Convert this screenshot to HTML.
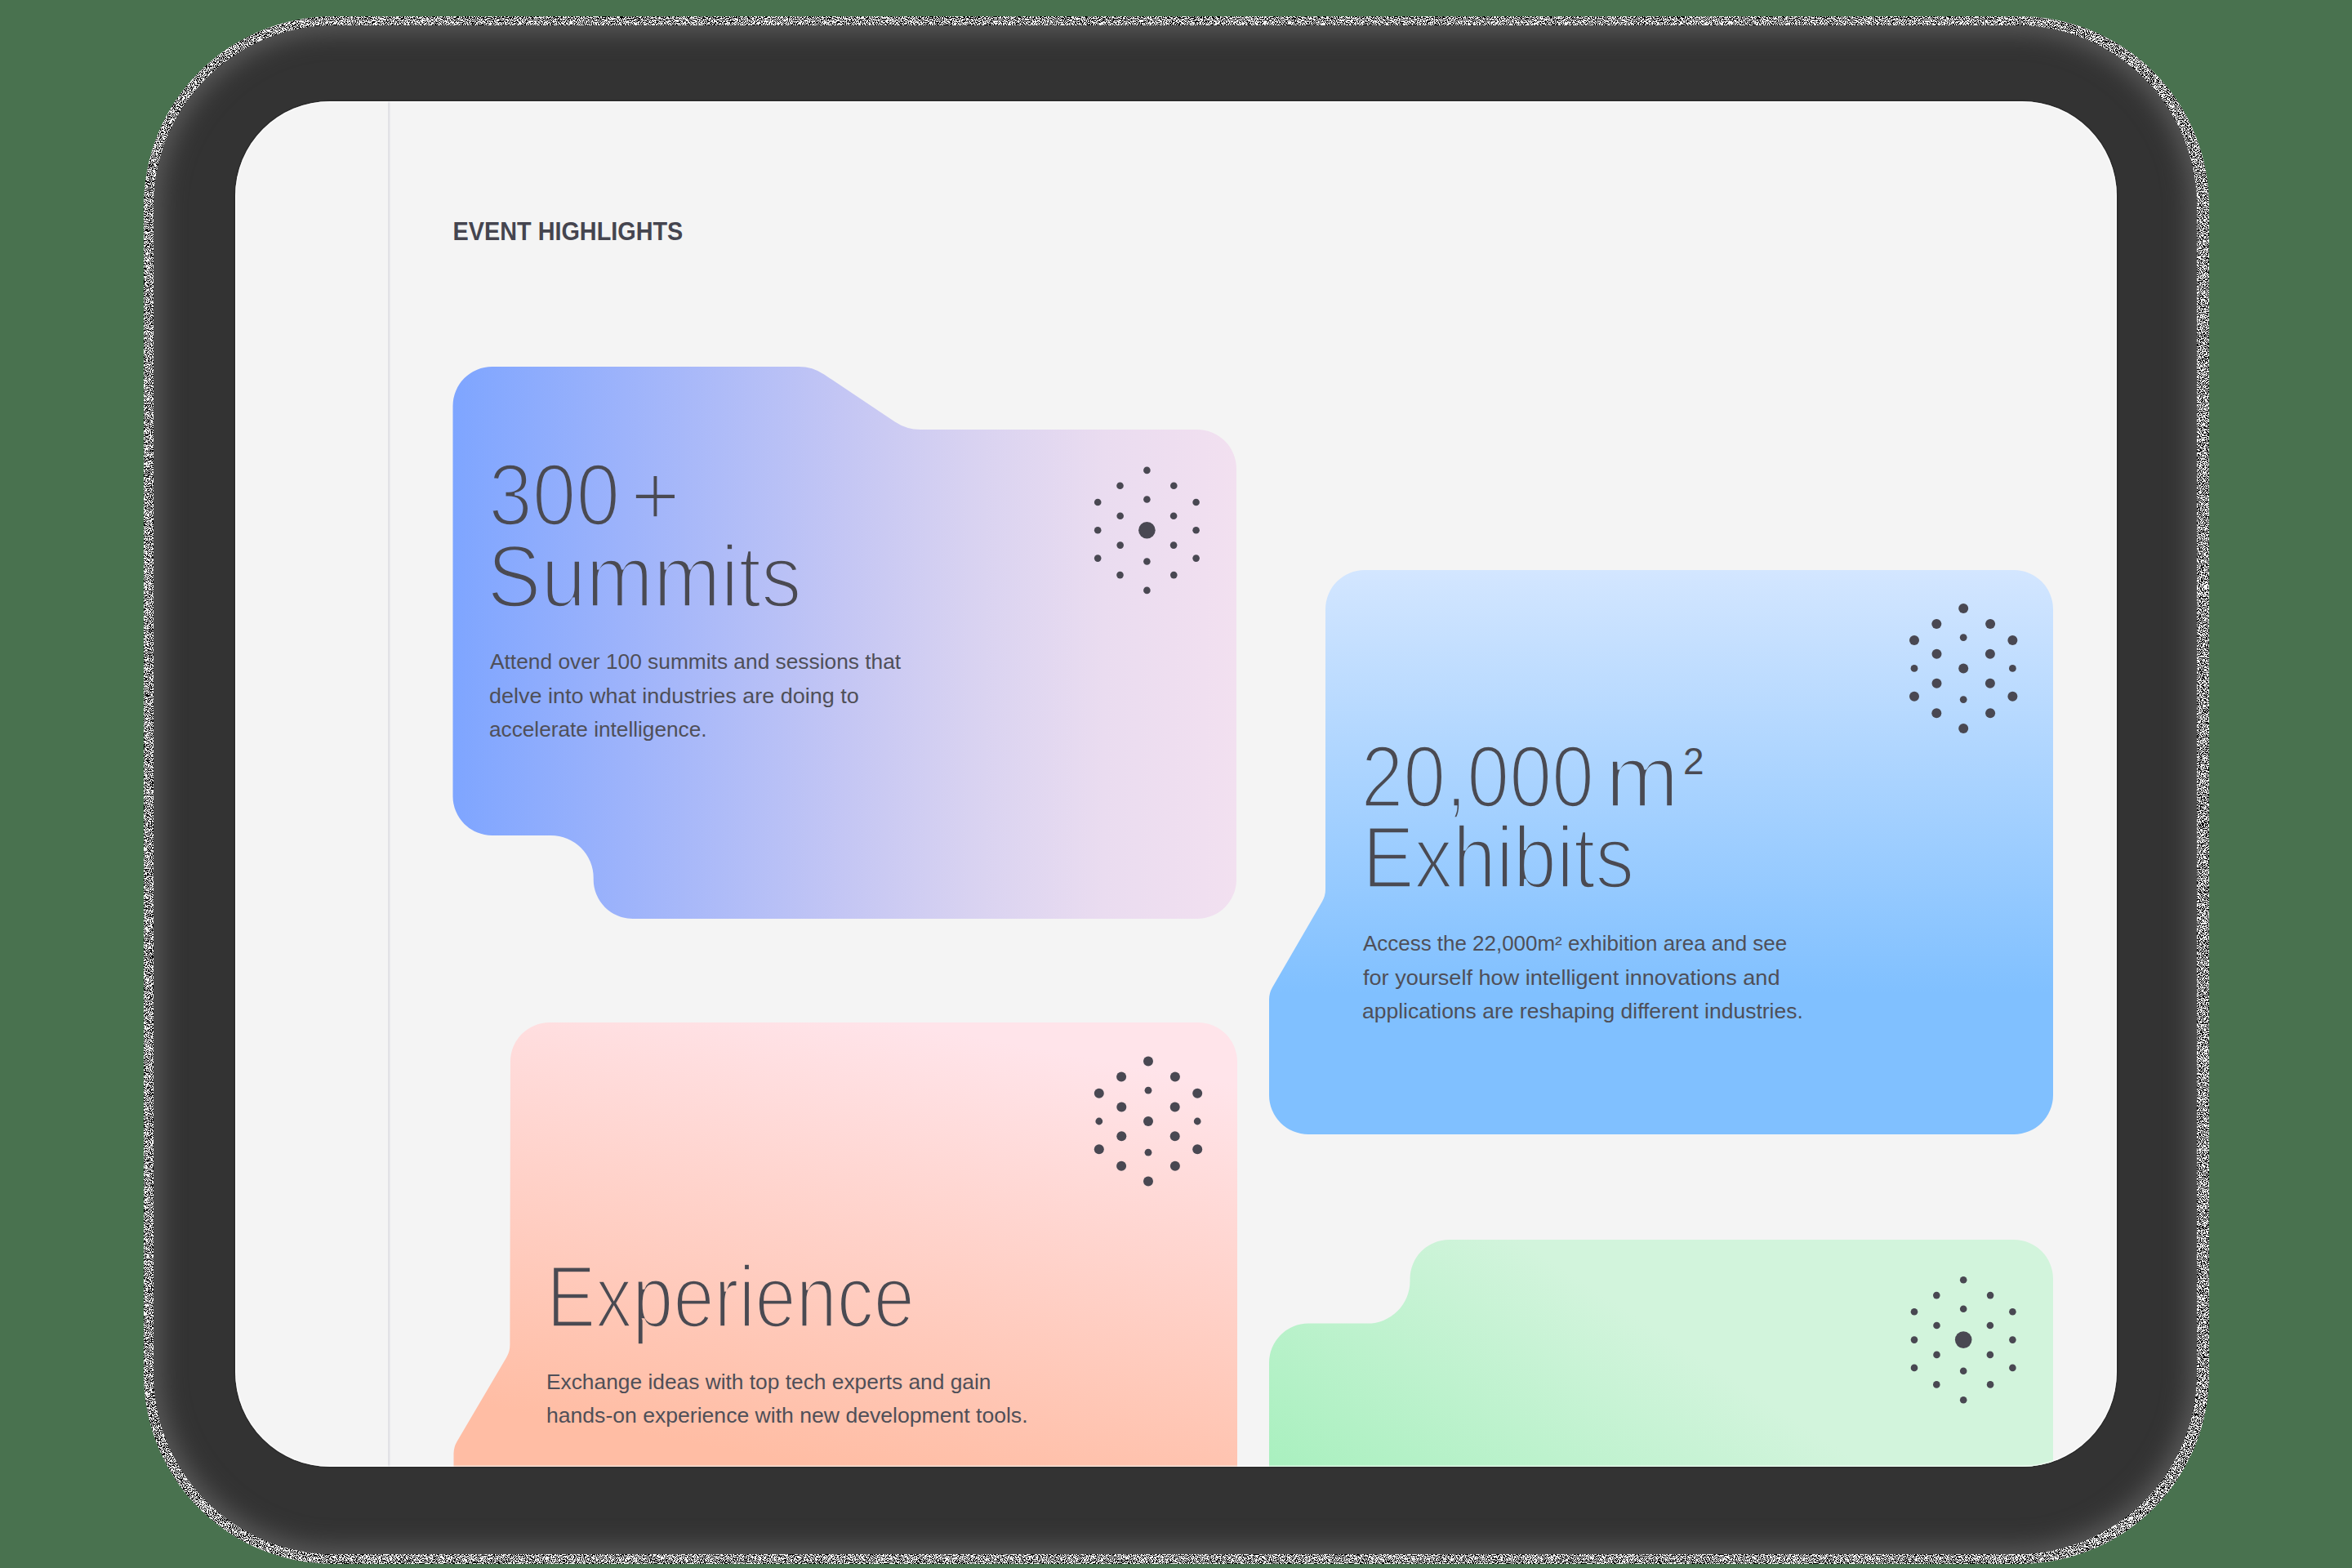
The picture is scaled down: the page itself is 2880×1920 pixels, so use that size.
<!DOCTYPE html>
<html><head><meta charset="utf-8">
<style>
html,body{margin:0;padding:0;width:2880px;height:1920px;overflow:hidden;background:#49724f;}
.b{position:absolute;}
svg{position:absolute;left:0;top:0;}
text{font-family:"Liberation Sans",sans-serif;}
</style></head><body>
<svg width="2880" height="1920"><defs><filter id="nz" x="0" y="0" width="2880" height="1920" filterUnits="userSpaceOnUse" color-interpolation-filters="sRGB">
<feTurbulence type="fractalNoise" baseFrequency="0.9" numOctaves="1" seed="7" result="t"/>
<feColorMatrix in="t" type="matrix" values="0 0 0 0 0  0 0 0 0 0  0 0 0 0 0  1 0 0 0 0" result="a"/>
<feComponentTransfer in="a" result="b"><feFuncA type="discrete" tableValues="1 1 1 1 1 1 1 1 1 1 1 1 0 0 0 0 0 0 0 0 0 0 0 0 0"/></feComponentTransfer>
<feComposite in="b" in2="SourceGraphic" operator="in"/></filter></defs>
<rect x="176" y="20" width="2529" height="1895" rx="232" ry="232" fill="#f2f2f2"/>
<rect x="176" y="20" width="2529" height="1895" rx="232" ry="232" fill="#000" filter="url(#nz)"/></svg>
<div class="b" style="left:188px;top:31px;width:2502px;height:1872px;border-radius:221px;background:#333333;box-shadow:inset 0 0 30px 8px #5c5c5c;"></div>
<svg width="2880" height="1920" viewBox="0 0 2880 1920">
<defs>
<clipPath id="scr"><rect x="288" y="124" width="2304" height="1672" rx="116" ry="116"/></clipPath>
<linearGradient id="g1" gradientUnits="userSpaceOnUse" x1="554" y1="0" x2="1514" y2="0">
<stop offset="0" stop-color="#7ea5ff"/><stop offset="0.22" stop-color="#9db3fb"/><stop offset="0.5" stop-color="#c4c6f4"/><stop offset="0.66" stop-color="#d8d2f1"/><stop offset="0.83" stop-color="#eadcf0"/><stop offset="1" stop-color="#f2e0f0"/></linearGradient>
<linearGradient id="g2" gradientUnits="userSpaceOnUse" x1="0" y1="698" x2="0" y2="1389">
<stop offset="0" stop-color="#d3e6ff"/><stop offset="0.75" stop-color="#80c0ff"/><stop offset="1" stop-color="#80c0ff"/></linearGradient>
<linearGradient id="g3" gradientUnits="userSpaceOnUse" x1="1100" y1="1252" x2="1000" y2="1796">
<stop offset="0" stop-color="#ffe4ea"/><stop offset="1" stop-color="#ffbda4"/></linearGradient>
<linearGradient id="g4" gradientUnits="userSpaceOnUse" x1="1554" y1="1796" x2="1772" y2="1461">
<stop offset="0" stop-color="#a9f0bf"/><stop offset="1" stop-color="#d2f4dc"/></linearGradient>
</defs>
<rect x="286.5" y="122.5" width="2307" height="1675" rx="117.5" ry="117.5" fill="#2a2a2a"/>
<g clip-path="url(#scr)">
<rect x="288" y="124" width="2304" height="1672" fill="#f4f4f4"/>
<rect x="475" y="124" width="2.5" height="1672" fill="#e2e2e6"/>
<path d="M554.50,497.00 A48,48 0 0 1 602.50,449.00 L977.98,449.00 A56,56 0 0 1 1009.14,458.47 L1095.86,516.53 A56,56 0 0 0 1127.02,526.00 L1466.00,526.00 A48,48 0 0 1 1514.00,574.00 L1514.00,1077.00 A48,48 0 0 1 1466.00,1125.00 L774.70,1125.00 A48,48 0 0 1 726.70,1077.00 L726.70,1075.00 A52,52 0 0 0 674.70,1023.00 L602.50,1023.00 A48,48 0 0 1 554.50,975.00 Z" fill="url(#g1)"/>
<path d="M1623.00,746.00 A48,48 0 0 1 1671.00,698.00 L2466.00,698.00 A48,48 0 0 1 2514.00,746.00 L2514.00,1341.00 A48,48 0 0 1 2466.00,1389.00 L1602.00,1389.00 A48,48 0 0 1 1554.00,1341.00 L1554.00,1224.07 A30,30 0 0 1 1558.05,1209.02 L1618.95,1103.98 A30,30 0 0 0 1623.00,1088.93 Z" fill="url(#g2)"/>
<path d="M624.93,1299.93 A48,48 0 0 1 672.93,1252.00 L1467.00,1252.00 A48,48 0 0 1 1515.00,1300.00 L1515.00,1950.00 L555.50,1950.00 L555.50,1780.18 A30,30 0 0 1 559.65,1764.95 L620.26,1662.03 A30,30 0 0 0 624.41,1646.85 Z" fill="url(#g3)"/>
<path d="M1726.50,1566.00 A48,48 0 0 1 1774.50,1518.00 L2466.00,1518.00 A48,48 0 0 1 2514.00,1566.00 L2514.00,1950.00 L1554.00,1950.00 L1554.00,1668.60 A48,48 0 0 1 1602.00,1620.60 L1674.50,1620.60 A52,52 0 0 0 1726.50,1568.60 Z" fill="url(#g4)"/>
<text id="eh" x="554.60" y="294.20" font-size="30.7" font-weight="bold" fill="#45454f" textLength="281.69" lengthAdjust="spacingAndGlyphs">EVENT HIGHLIGHTS</text>
<text id="h1a" x="598.14" y="643.20" font-size="107" fill="#4a4a52" stroke="url(#g1)" stroke-width="3.6" textLength="160.90" lengthAdjust="spacingAndGlyphs">300</text>
<text id="h1p" x="772.12" y="643.40" font-size="107" fill="#4a4a52" stroke="url(#g1)" stroke-width="3.6" textLength="60.90" lengthAdjust="spacingAndGlyphs">+</text>
<text id="h1b" x="596.54" y="742.80" font-size="107" fill="#4a4a52" stroke="url(#g1)" stroke-width="3.6" textLength="384.96" lengthAdjust="spacingAndGlyphs">Summits</text>
<text id="d1a" x="600.00" y="819.20" font-size="26" fill="#4f4f58" textLength="503.16" lengthAdjust="spacingAndGlyphs">Attend over 100 summits and sessions that</text>
<text id="d1b" x="598.96" y="860.70" font-size="26" fill="#4f4f58" textLength="452.79" lengthAdjust="spacingAndGlyphs">delve into what industries are doing to</text>
<text id="d1c" x="598.99" y="901.70" font-size="26" fill="#4f4f58" textLength="266.53" lengthAdjust="spacingAndGlyphs">accelerate intelligence.</text>
<text id="h2a" x="1666.42" y="988.20" font-size="107" fill="#4a4a52" stroke="url(#g2)" stroke-width="3.6" textLength="285.65" lengthAdjust="spacingAndGlyphs">20,000</text>
<text id="h2m" x="1965.68" y="988.20" font-size="107" fill="#4a4a52" stroke="url(#g2)" stroke-width="3.6" textLength="90.15" lengthAdjust="spacingAndGlyphs">m</text>
<text id="h2s" x="2061.00" y="948.30" font-size="46" fill="#4a4a52">2</text>
<text id="h2b" x="1668.14" y="1087.40" font-size="107" fill="#4a4a52" stroke="url(#g2)" stroke-width="3.6" textLength="332.93" lengthAdjust="spacingAndGlyphs">Exhibits</text>
<text id="d2a" x="1669.00" y="1164.00" font-size="26" fill="#4f4f58" textLength="519.13" lengthAdjust="spacingAndGlyphs">Access the 22,000m² exhibition area and see</text>
<text id="d2b" x="1669.00" y="1205.70" font-size="26" fill="#4f4f58" textLength="510.45" lengthAdjust="spacingAndGlyphs">for yourself how intelligent innovations and</text>
<text id="d2c" x="1667.98" y="1246.70" font-size="26" fill="#4f4f58" textLength="539.83" lengthAdjust="spacingAndGlyphs">applications are reshaping different industries.</text>
<text id="h3" x="669.19" y="1624.60" font-size="107" fill="#4a4a52" stroke="url(#g3)" stroke-width="3.6" textLength="450.71" lengthAdjust="spacingAndGlyphs">Experience</text>
<text id="d3a" x="668.97" y="1700.80" font-size="26" fill="#4f4f58" textLength="544.54" lengthAdjust="spacingAndGlyphs">Exchange ideas with top tech experts and gain</text>
<text id="d3b" x="668.96" y="1742.20" font-size="26" fill="#4f4f58" textLength="589.59" lengthAdjust="spacingAndGlyphs">hands-on experience with new development tools.</text>
<g fill="#494852"><circle cx="1404.4" cy="575.9" r="4.3"/><circle cx="1371.5" cy="594.8" r="4.3"/><circle cx="1437.3" cy="594.8" r="4.3"/><circle cx="1404.4" cy="611.5" r="4.3"/><circle cx="1344.2" cy="615.0" r="4.3"/><circle cx="1464.6" cy="615.0" r="4.3"/><circle cx="1371.7" cy="631.7" r="4.3"/><circle cx="1437.1" cy="631.7" r="4.3"/><circle cx="1344.2" cy="649.3" r="4.3"/><circle cx="1464.6" cy="649.3" r="4.3"/><circle cx="1371.7" cy="667.6" r="4.3"/><circle cx="1437.1" cy="667.6" r="4.3"/><circle cx="1344.2" cy="683.6" r="4.3"/><circle cx="1464.6" cy="683.6" r="4.3"/><circle cx="1404.4" cy="687.5" r="4.3"/><circle cx="1371.5" cy="704.1" r="4.3"/><circle cx="1437.3" cy="704.1" r="4.3"/><circle cx="1404.4" cy="722.9" r="4.3"/><circle cx="1404.4" cy="649.3" r="10.3"/></g>
<g fill="#494852"><circle cx="2404.2" cy="745.0" r="6.0"/><circle cx="2371.3" cy="763.9" r="6.0"/><circle cx="2437.1" cy="763.9" r="6.0"/><circle cx="2404.2" cy="780.6" r="4.4"/><circle cx="2344.0" cy="784.1" r="6.0"/><circle cx="2464.4" cy="784.1" r="6.0"/><circle cx="2371.5" cy="800.8" r="6.0"/><circle cx="2436.9" cy="800.8" r="6.0"/><circle cx="2344.0" cy="818.4" r="4.4"/><circle cx="2464.4" cy="818.4" r="4.4"/><circle cx="2371.5" cy="836.7" r="6.0"/><circle cx="2436.9" cy="836.7" r="6.0"/><circle cx="2344.0" cy="852.7" r="6.0"/><circle cx="2464.4" cy="852.7" r="6.0"/><circle cx="2404.2" cy="856.6" r="4.4"/><circle cx="2371.3" cy="873.2" r="6.0"/><circle cx="2437.1" cy="873.2" r="6.0"/><circle cx="2404.2" cy="892.0" r="6.0"/><circle cx="2404.2" cy="818.4" r="6.0"/></g>
<g fill="#494852"><circle cx="1406.0" cy="1299.6" r="6.0"/><circle cx="1373.1" cy="1318.5" r="6.0"/><circle cx="1438.9" cy="1318.5" r="6.0"/><circle cx="1406.0" cy="1335.2" r="4.4"/><circle cx="1345.8" cy="1338.7" r="6.0"/><circle cx="1466.2" cy="1338.7" r="6.0"/><circle cx="1373.3" cy="1355.4" r="6.0"/><circle cx="1438.7" cy="1355.4" r="6.0"/><circle cx="1345.8" cy="1373.0" r="4.4"/><circle cx="1466.2" cy="1373.0" r="4.4"/><circle cx="1373.3" cy="1391.3" r="6.0"/><circle cx="1438.7" cy="1391.3" r="6.0"/><circle cx="1345.8" cy="1407.3" r="6.0"/><circle cx="1466.2" cy="1407.3" r="6.0"/><circle cx="1406.0" cy="1411.2" r="4.4"/><circle cx="1373.1" cy="1427.8" r="6.0"/><circle cx="1438.9" cy="1427.8" r="6.0"/><circle cx="1406.0" cy="1446.6" r="6.0"/><circle cx="1406" cy="1373" r="6.0"/></g>
<g fill="#494852"><circle cx="2404.2" cy="1567.2" r="4.3"/><circle cx="2371.3" cy="1586.1" r="4.3"/><circle cx="2437.1" cy="1586.1" r="4.3"/><circle cx="2404.2" cy="1602.8" r="4.3"/><circle cx="2344.0" cy="1606.3" r="4.3"/><circle cx="2464.4" cy="1606.3" r="4.3"/><circle cx="2371.5" cy="1623.0" r="4.3"/><circle cx="2436.9" cy="1623.0" r="4.3"/><circle cx="2344.0" cy="1640.6" r="4.3"/><circle cx="2464.4" cy="1640.6" r="4.3"/><circle cx="2371.5" cy="1658.9" r="4.3"/><circle cx="2436.9" cy="1658.9" r="4.3"/><circle cx="2344.0" cy="1674.9" r="4.3"/><circle cx="2464.4" cy="1674.9" r="4.3"/><circle cx="2404.2" cy="1678.8" r="4.3"/><circle cx="2371.3" cy="1695.4" r="4.3"/><circle cx="2437.1" cy="1695.4" r="4.3"/><circle cx="2404.2" cy="1714.2" r="4.3"/><circle cx="2404.2" cy="1640.6" r="10.3"/></g>
<rect x="288" y="124" width="2304" height="1672" rx="116" ry="116" fill="none" stroke="rgba(255,255,255,0.55)" stroke-width="3"/>
</g>
</svg>
</body></html>
